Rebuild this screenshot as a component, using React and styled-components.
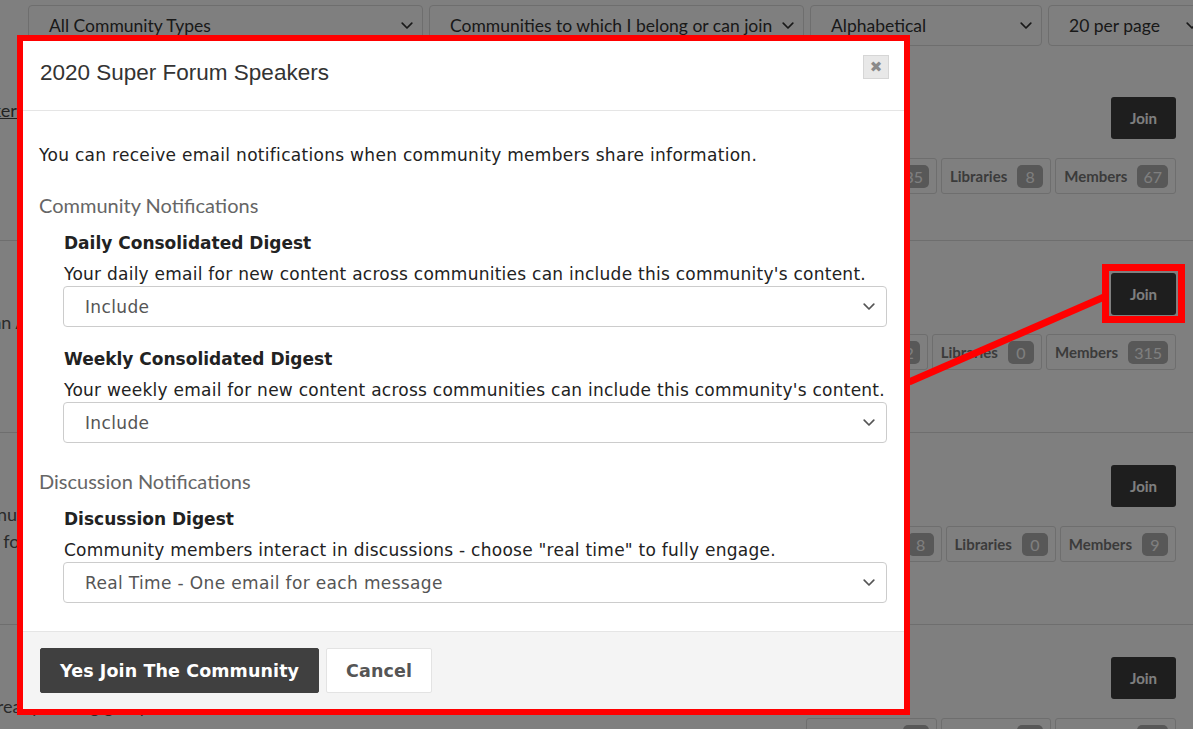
import styled, { createGlobalStyle } from 'styled-components'

const GlobalStyle = createGlobalStyle`
  html, body {
    margin: 0;
    padding: 0;
    background: #fff;
    overflow: hidden;
  }
  #root {
    width: 1193px;
    height: 729px;
    position: relative;
    overflow: hidden;
  }
`

const Chevron = ({ size = 12, color = '#444' }) => (
  <svg width={size} height={size * 0.6} viewBox="0 0 10 6" fill="none">
    <path d="M1 1l4 4 4-4" stroke={color} strokeWidth="1.4" strokeLinecap="round" strokeLinejoin="round" />
  </svg>
)

/* ---------- page behind the dialog ---------- */

const Page = styled.div`
  width: 1193px;
  height: 729px;
  font-family: Lato, 'Open Sans', sans-serif;
  color: #444;
`

const FilterBar = styled.div`
  display: flex;
  gap: 6px;
  padding: 5px 0 0 28px;
  white-space: nowrap;
`

const FilterSelect = styled.div`
  flex: 0 0 ${(p) => p.$w}px;
  height: 41px;
  box-sizing: border-box;
  border: 1px solid #dcdcdc;
  border-radius: 4px;
  display: flex;
  align-items: center;
  justify-content: space-between;
  padding: 0 9px 0 20px;
  font-size: 17.5px;
  color: #333;
`

const List = styled.div`
  margin-top: 19px;
`

const Row = styled.div`
  height: ${(p) => p.$h}px;
  box-sizing: border-box;
  border-bottom: 1px solid #dcdcdc;
  display: flex;
  justify-content: space-between;
  padding: 32px 17px 0 0;
`

const Info = styled.div`
  margin-left: -46px;
  font-size: 18px;
  color: #555;
`

const Title = styled.a`
  display: block;
  line-height: 26px;
  margin-bottom: 10px;
  color: #444;
  text-decoration: underline;
`

const Desc = styled.div`
  line-height: 27px;
  width: 700px;
`

const Actions = styled.div`
  display: flex;
  flex-direction: column;
  align-items: flex-end;
  gap: 19px;
`

const JoinButton = styled.div`
  width: 65px;
  height: 42px;
  border-radius: 3px;
  background: #3c3c3c;
  color: #fff;
  font-weight: 700;
  font-size: 15px;
  display: flex;
  align-items: center;
  justify-content: center;
`

const Stats = styled.div`
  display: flex;
  gap: 4px;
`

const Stat = styled.div`
  height: 36px;
  box-sizing: border-box;
  border: 1px solid #dcdcdc;
  border-radius: 3px;
  display: flex;
  align-items: center;
  gap: 10px;
  padding: 0 7px 0 8px;
  font-size: 15px;
  font-weight: 700;
  color: #777;
`

const Badge = styled.span`
  min-width: 26px;
  height: 23px;
  box-sizing: border-box;
  padding: 0 6px;
  border-radius: 5px;
  background: #b0b0b0;
  color: #fff;
  font-weight: 400;
  font-size: 16px;
  display: flex;
  align-items: center;
  justify-content: center;
`

/* ---------- overlay + dialog ---------- */

const Backdrop = styled.div`
  position: absolute;
  inset: 0;
  background: rgba(0, 0, 0, 0.5);
`

const Modal = styled.div`
  position: absolute;
  left: 17px;
  top: 35px;
  width: 893px;
  height: 680px;
  box-sizing: border-box;
  border: 6px solid #ff0000;
  background: #fff;
  display: flex;
  flex-direction: column;
`

const Header = styled.div`
  height: 70px;
  box-sizing: border-box;
  border-bottom: 1px solid #e5e5e5;
  display: flex;
  justify-content: space-between;
  align-items: flex-start;
  padding: 14px 15px 0 17px;
`

const ModalTitle = styled.h4`
  margin: 6px 0 0;
  font-family: 'Liberation Sans', Arial, sans-serif;
  font-weight: 400;
  font-size: 22.5px;
  line-height: 24px;
  color: #333;
`

const CloseButton = styled.div`
  width: 26px;
  height: 24px;
  box-sizing: border-box;
  border: 1px solid #d6d6d6;
  background: #e8e8e8;
  color: #8a8a8a;
  font-family: 'DejaVu Sans', sans-serif;
  font-size: 15px;
  font-weight: 700;
  display: flex;
  align-items: center;
  justify-content: center;
`

const Body = styled.div`
  flex: 1;
  padding: 33px 17px 0 16px;
  font-family: 'DejaVu Sans', Verdana, sans-serif;
  color: #222;
`

const Intro = styled.p`
  margin: 0 0 27px;
  font-size: 17px;
  letter-spacing: 0.3px;
  line-height: 22px;
`

const SectionHeading = styled.div`
  font-family: Lato, sans-serif;
  font-size: 20px;
  line-height: 24px;
  color: #666;
  margin-bottom: ${(p) => p.$mb}px;
`

const Group = styled.div`
  margin: 0 0 ${(p) => p.$mb}px 24px;
`

const Label = styled.div`
  font-weight: 700;
  font-size: 17px;
  line-height: 24px;
  color: #222;
  margin: 0 0 8px 1px;
`

const Help = styled.div`
  font-size: 17px;
  letter-spacing: 0.25px;
  line-height: 22px;
  white-space: nowrap;
  margin: 0 0 1px 1px;
`

const SelectBox = styled.div`
  height: 41px;
  box-sizing: border-box;
  border: 1px solid #ccc;
  border-radius: 4px;
  display: flex;
  align-items: center;
  justify-content: space-between;
  padding: 0 11px 0 21px;
  font-size: 17px;
  letter-spacing: 0.35px;
  color: #555;
`

const Footer = styled.div`
  height: 78px;
  box-sizing: border-box;
  border-top: 1px solid #e5e5e5;
  background: #f4f4f4;
  display: flex;
  align-items: flex-start;
  gap: 7px;
  padding: 16px 0 0 17px;
  font-family: 'DejaVu Sans', Verdana, sans-serif;
`

const FooterButton = styled.div`
  height: 45px;
  box-sizing: border-box;
  padding: 0 19px;
  border-radius: 2px;
  border: 1px solid ${(p) => (p.$primary ? '#404040' : '#e3e3e3')};
  background: ${(p) => (p.$primary ? '#404040' : '#fff')};
  color: ${(p) => (p.$primary ? '#fff' : '#555')};
  font-weight: 700;
  font-size: 17.5px;
  letter-spacing: 0.1px;
  display: flex;
  align-items: center;
`

const Annotation = styled.svg`
  position: absolute;
  inset: 0;
  pointer-events: none;
`

const rows = [
  {
    h: 176,
    title: 'Speakers Bureau',
    desc: null,
    stats: [['Discussions', '35'], ['Libraries', '8'], ['Members', '67']],
  },
  {
    h: 192,
    title: '',
    desc: ['Human Anatomy instructors share course materials and lab resources.'],
    stats: [['Discussions', '12'], ['Libraries', '0'], ['Members', '315']],
  },
  {
    h: 192,
    title: '',
    desc: ['Continuing education community for members tracking CE', 'hours for certification renewal.'],
    stats: [['Discussions', '8'], ['Libraries', '0'], ['Members', '9']],
  },
  {
    h: 192,
    title: '',
    desc: ['A Retreat planning group for the annual summit.'],
    stats: [['Discussions', '4'], ['Libraries', '2'], ['Members', '41']],
  },
]

const Select = ({ value }) => (
  <SelectBox>
    <span>{value}</span>
    <Chevron size={12} color="#555" />
  </SelectBox>
)

export default function App() {
  return (
    <>
      <GlobalStyle />
      <Page>
        <FilterBar>
          <FilterSelect $w={395}>All Community Types<Chevron color="#333" /></FilterSelect>
          <FilterSelect $w={375}>Communities to which I belong or can join<Chevron color="#333" /></FilterSelect>
          <FilterSelect $w={232}>Alphabetical<Chevron color="#333" /></FilterSelect>
          <FilterSelect $w={160}>20 per page<Chevron color="#333" /></FilterSelect>
        </FilterBar>
        <List>
          {rows.map((r, i) => (
            <Row key={i} $h={r.h}>
              <Info>
                <Title>{r.title || '\u00a0'}</Title>
                {r.desc && r.desc.map((line) => <Desc key={line}>{line}</Desc>)}
              </Info>
              <Actions>
                <JoinButton>Join</JoinButton>
                <Stats>
                  {r.stats.map(([label, n]) => (
                    <Stat key={label}>
                      {label}
                      <Badge>{n}</Badge>
                    </Stat>
                  ))}
                </Stats>
              </Actions>
            </Row>
          ))}
        </List>
      </Page>

      <Backdrop />

      <Modal>
        <Header>
          <ModalTitle>2020 Super Forum Speakers</ModalTitle>
          <CloseButton>✖</CloseButton>
        </Header>
        <Body>
          <Intro>You can receive email notifications when community members share information.</Intro>
          <SectionHeading $mb={14}>Community Notifications</SectionHeading>
          <Group $mb={20}>
            <Label>Daily Consolidated Digest</Label>
            <Help>Your daily email for new content across communities can include this community's content.</Help>
            <Select value="Include" />
          </Group>
          <Group $mb={26}>
            <Label>Weekly Consolidated Digest</Label>
            <Help>Your weekly email for new content across communities can include this community's content.</Help>
            <Select value="Include" />
          </Group>
          <SectionHeading $mb={14}>Discussion Notifications</SectionHeading>
          <Group $mb={0}>
            <Label>Discussion Digest</Label>
            <Help>Community members interact in discussions - choose "real time" to fully engage.</Help>
            <Select value="Real Time - One email for each message" />
          </Group>
        </Body>
        <Footer>
          <FooterButton $primary>Yes Join The Community</FooterButton>
          <FooterButton>Cancel</FooterButton>
        </Footer>
      </Modal>

      <Annotation width="1193" height="729" viewBox="0 0 1193 729">
        <line x1="909" y1="382" x2="1104" y2="297" stroke="#ff0000" strokeWidth="7" />
        <rect x="1105.5" y="267.5" width="76" height="52" fill="none" stroke="#ff0000" strokeWidth="7" />
      </Annotation>
    </>
  )
}
